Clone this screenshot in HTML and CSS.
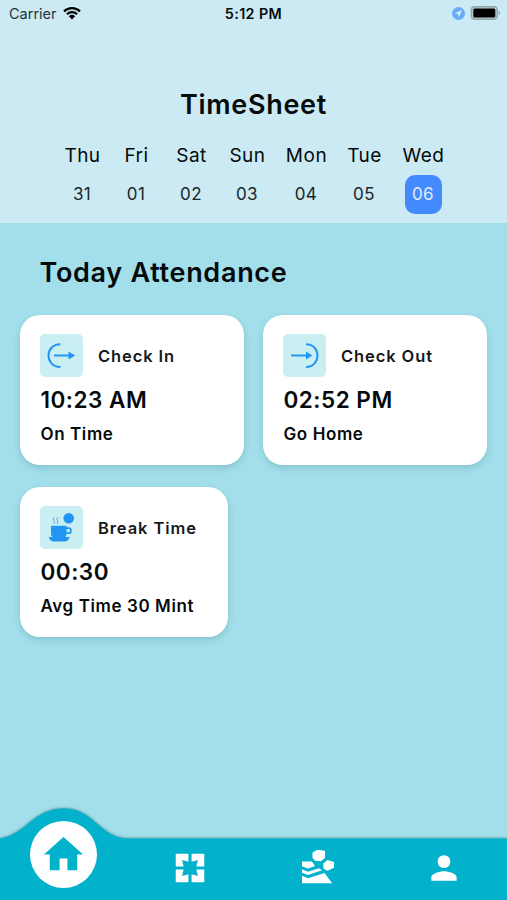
FILE: index.html
```
<!DOCTYPE html>
<html lang="en">
<head>
<meta charset="utf-8">
<title>TimeSheet</title>
<link rel="stylesheet" href="styles.css">
</head>
<body>
<div class="app">
  <header class="header">
    <div class="status">
      <div class="status-left"><span>Carrier</span>
        <svg class="wifi" viewBox="0 0 18 14"><path d="M1 5.300a11.500 11.500 0 0 1 16 0M3.900 8.300a7.300 7.300 0 0 1 10.200 0" fill="none" stroke="currentColor" stroke-width="2.300"/><path d="M5.900 10.200a4.500 4.500 0 0 1 6.200 0L9 13.600z" fill="currentColor"/></svg>
      </div>
      <div class="status-time">5:12 PM</div>
      <div class="status-right">
        <svg class="location" viewBox="0 0 13 13"><circle cx="6.500" cy="6.500" r="6.500" fill="#69adf5"/><path d="M10 3L2.800 6.400l3.500.4.4 3.500z" fill="#e2f4fb"/></svg>
        <svg class="battery" viewBox="0 0 30 14"><rect x=".8" y=".8" width="26" height="12.400" rx="3.400" fill="#b4ccd0" stroke="#8fa7aa" stroke-width="1.400"/><rect x="2.800" y="2.600" width="22" height="8.800" rx="1.500" fill="#000"/><path d="M28.200 4.800c2 .8 2 3.600 0 4.400z" fill="#8fa7aa"/></svg>
      </div>
    </div>
    <h1 class="title">TimeSheet</h1>
    <div class="days">
      <div class="day"><span class="name">Thu</span><span class="date">31</span></div>
      <div class="day"><span class="name">Fri</span><span class="date">01</span></div>
      <div class="day"><span class="name">Sat</span><span class="date">02</span></div>
      <div class="day"><span class="name">Sun</span><span class="date">03</span></div>
      <div class="day"><span class="name">Mon</span><span class="date">04</span></div>
      <div class="day"><span class="name">Tue</span><span class="date">05</span></div>
      <div class="day"><span class="name">Wed</span><span class="date selected">06</span></div>
    </div>
  </header>
  <main class="main">
    <h2 class="heading">Today Attendance</h2>
    <div class="cards">
      <section class="card">
        <div class="card-head">
          <svg class="tile" viewBox="0 0 43 43"><path d="M20.500 10.200C4.500 10.200 4.500 33 20.500 33M14 21.600h17" fill="none" stroke="#2196f3" stroke-width="2"/><path d="M28.500 17.600l6.700 4-6.700 4z" fill="#2196f3"/></svg>
          <span class="label">Check In</span>
        </div>
        <div class="time">10:23 AM</div>
        <div class="note">On Time</div>
      </section>
      <section class="card">
        <div class="card-head">
          <svg class="tile" viewBox="0 0 43 43"><path d="M23 10.200C38.300 10.200 38.300 33 23 33M8 21.600h17" fill="none" stroke="#2196f3" stroke-width="2"/><path d="M23 17.600l6.500 4-6.500 4z" fill="#2196f3"/></svg>
          <span class="label">Check Out</span>
        </div>
        <div class="time">02:52 PM</div>
        <div class="note">Go Home</div>
      </section>
      <section class="card card-break">
        <div class="card-head">
          <svg class="tile" viewBox="0 0 43 43"><g fill="#2196f3"><circle cx="28.700" cy="12.300" r="5.300"/><path d="M11 19.700h15.600v8.300q0 2-1.500 3h4.400q-.3 3.500-4 4.400H13q-3.700-.9-4.200-4.400h3.700q-1.500-1-1.500-3z"/></g><path d="M26 22.200h2.800a2 2 0 0 1 2 2v1a2 2 0 0 1-2 2H26" fill="none" stroke="#2196f3" stroke-width="1.700"/><path d="M14.500 11.200q-2 1.500-.7 3t-.2 3.600M18 11.200q-2 1.500-.7 3t-.2 3.600" fill="none" stroke="#2196f3" stroke-width="1" opacity=".75"/></svg>
          <span class="label">Break Time</span>
        </div>
        <div class="time">00:30</div>
        <div class="note">Avg Time 30 Mint</div>
      </section>
    </div>
  </main>
  <nav class="nav">
    <svg class="nav-shape" viewBox="0 0 507 96"><path d="M0 34.500C27 30 33 4.500 64 4.500S99 34.500 129 34.500H507V96H0z" fill="#02b1cc"/></svg>
    <a class="item active"><span class="bubble"><svg viewBox="0 0 24 24"><path d="M10 20v-6h4v6h5v-8h3L12 3 2 12h3v8z" fill="#02b1cc"/></svg></span></a>
    <a class="item"><svg viewBox="0 0 24 24"><path d="M3 3v8h5L7 7l4 1V3H3zm5 10H3v8h8v-5l-4 1 1-4zm9 4l-4-1v5h8v-8h-5l1 4zm4-14h-8v5l4-1-1 4h5V3z" fill="#fff"/></svg></a>
    <a class="item"><svg viewBox="298 849.500 38 38"><path d="M312.500 853l5-2.800 7.500 1v7.200l-4 3.300-6-.5-2.500-2.800zM323.200 864l4.300-3.500 6.500 2v5.700l-6.500 3-4-2zM302 862h10l3 4.500-7 2.500-6-2.300zM302 869.800l6 2.500 11-3.500 3.200 2L308 875.500l-6-2.200zM302 876.300l6 2.500 16.500-5.300 7.700 10.300H302z" fill="#fff"/></svg></a>
    <a class="item"><svg viewBox="0 0 24 24"><path d="M12 12c2.210 0 4-1.790 4-4s-1.790-4-4-4-4 1.790-4 4 1.790 4 4 4zm0 2c-2.670 0-8 1.340-8 4v2h16v-2c0-2.660-5.330-4-8-4z" fill="#fff"/></svg></a>
  </nav>
</div>
</body>
</html>
```
FILE: styles.css
```
* { box-sizing: border-box; }
body { margin: 0; font-family: Inter, "Liberation Sans", sans-serif; color: #050a0c; }
.app { width: 507px; height: 900px; display: flex; flex-direction: column; background: #a3dfea; overflow: hidden; }
.header { height: 223px; flex: none; background: #cceaf3; }
.status { height: 28px; padding: 0 6px 0 9px; display: grid; grid-template-columns: 1fr auto 1fr; align-items: center; font-size: 14.5px; line-height: 28px; }
.status-left { display: flex; align-items: center; gap: 6px; color: #26343a; }
.wifi { width: 18px; height: 14px; margin-top: -2px; color: #000; }
.status-time { font-weight: 600; font-size: 14.3px; letter-spacing: .4px; margin-right: 3px; }
.status-right { display: flex; justify-content: flex-end; align-items: center; gap: 5px; margin-top: -2px; }
.location { width: 13px; height: 13px; }
.battery { width: 31px; height: 14px; }
.title { margin: 59px 0 0; text-align: center; font-size: 27px; line-height: 36px; font-weight: 600; letter-spacing: .7px; }
.days { display: grid; grid-template-columns: 54px 54px 56px 56px 62px 54px 64px; margin: 19px 0 0 55px; }
.day { display: flex; flex-direction: column; align-items: center; gap: 5px; }
.name { font-size: 19px; line-height: 28px; letter-spacing: .5px; margin-left: 1px; }
.date { width: 37px; height: 39px; border-radius: 10px; font-size: 17px; line-height: 39px; text-align: center; letter-spacing: .4px; color: #19262b; }
.selected { background: #448aff; color: #e1edfa; }
.main { flex: 1; padding: 31px 19px 0 20px; }
.heading { margin: 0 0 24px 19.5px; font-size: 27px; line-height: 37px; font-weight: 600; letter-spacing: .7px; }
.cards { display: grid; grid-template-columns: 224px 224px; gap: 22px 19px; }
.card { height: 150px; padding: 19px 20px; background: #fff; border-radius: 20px; box-shadow: 0 3px 7px rgba(20, 90, 110, .2); }
.card-break { width: 208px; }
.card-head { display: flex; align-items: center; gap: 15px; }
.tile { width: 43px; height: 43px; flex: none; background: #caeff2; border-radius: 5px; }
.label { font-size: 16.5px; font-weight: 600; letter-spacing: .9px; color: #17191a; white-space: nowrap; }
.time { margin: 8px 0 0 .5px; font-size: 22.5px; line-height: 30px; font-weight: 600; letter-spacing: .5px; }
.note { margin: 8px 0 0 .5px; font-size: 17px; line-height: 22px; font-weight: 600; letter-spacing: .6px; white-space: nowrap; }
.nav { position: relative; height: 61px; flex: none; display: grid; grid-template-columns: repeat(4, 1fr); align-items: center; padding-bottom: 3px; }
.nav-shape { position: absolute; left: 0; bottom: 0; width: 507px; height: 96px; filter: drop-shadow(0 0 1.500px rgba(0, 70, 80, .65)); }
.item { position: relative; display: flex; justify-content: center; }
.item svg { width: 38px; height: 38px; display: block; }
.item .bubble { width: 67px; height: 67px; margin-top: -27px; border-radius: 50%; background: #fff; display: flex; align-items: center; justify-content: center; }
.item .bubble svg { width: 47px; height: 47px; }
```
